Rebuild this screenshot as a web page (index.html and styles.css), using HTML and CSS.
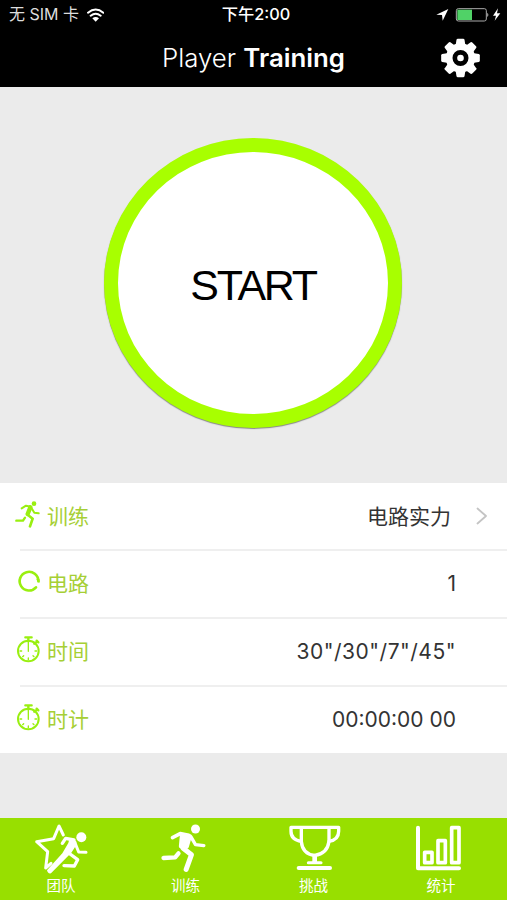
FILE: index.html
```html
<!DOCTYPE html>
<html lang="zh-CN">
<head>
  <meta charset="UTF-8">
  <title>Player Training</title>
  <meta name="viewport" content="width=device-width, initial-scale=1.0">
  <link rel="stylesheet" href="styles.css">
</head>
<body>

<svg class="sprite" width="0" height="0">
  <symbol id="runner" viewBox="85.5 39 162 156">
    <circle cx="195" cy="57" r="13.5" fill="currentColor"/>
    <path d="M126 83L149 71L175 76" class="line" stroke-width="11"/>
    <path d="M154 77L178 79L169 110L151 109Z" fill="currentColor" stroke="currentColor" stroke-width="12" stroke-linejoin="round"/>
    <path d="M181 80L195 104L220 107" class="line" stroke-width="10"/>
    <path d="M157 114L183 134L167 178" class="line" stroke-width="15"/>
    <path d="M144 130L134 142L99 144" class="line" stroke-width="13"/>
  </symbol>
  <symbol id="stopwatch" viewBox="48 72 75 84">
    <circle cx="85" cy="120" r="31" class="line" stroke-width="6"/>
    <path d="M76 79H95M85 80V91M103 98L112 91M110 89L115 94" class="line" stroke-width="7"/>
    <path d="M85 94V121M60 120H65M105 120H110M85 141V146M68 137L71 134M99 134L102 137" class="line" stroke-width="4"/>
  </symbol>
</svg>

<div class="app">
  <header class="header">
    <div class="status">
      <div class="status-left">
        <span>无 SIM 卡</span>
        <svg class="wifi" viewBox="261 20 51 42">
          <path d="M264 34Q287 15 310 34M272 43Q287 31 302 43" class="line" stroke-width="6"/>
          <path d="M277 51Q287 43 297 51L287 61Z" fill="currentColor"/>
        </svg>
      </div>
      <div class="status-time">下午2:00</div>
      <div class="status-right">
        <svg class="power" viewBox="555 20 201 48">
          <path d="M595 26L559 43L576 44L578 61Z" fill="#fff"/>
          <rect x="619" y="25" width="90" height="37" rx="6" fill="none" stroke="#aaa" stroke-width="3"/>
          <path d="M622 28H666V59H622Z" fill="#50d267"/>
          <path d="M712 37Q718 43 712 50Z" fill="#ccc"/>
          <path d="M744 24L729 46H738L734 61L751 39H741Z" fill="#fff"/>
        </svg>
      </div>
    </div>
    <div class="title-bar">
      <h1>Player <b>Training</b></h1>
      <svg class="gear" viewBox="-60 -60 120 120">
        <g fill="currentColor">
          <path id="tooth" d="M-15 -36L-12 -55Q-11 -58 -8 -58H8Q11 -58 12 -55L15 -36Z"/>
          <use href="#tooth" transform="rotate(45)"/>
          <use href="#tooth" transform="rotate(90)"/>
          <use href="#tooth" transform="rotate(135)"/>
          <use href="#tooth" transform="rotate(180)"/>
          <use href="#tooth" transform="rotate(225)"/>
          <use href="#tooth" transform="rotate(270)"/>
          <use href="#tooth" transform="rotate(315)"/>
        </g>
        <circle r="34" fill="none" stroke="currentColor" stroke-width="20"/>
        <circle r="10" fill="currentColor"/>
      </svg>
    </div>
  </header>

  <main>
    <div class="start-area">
      <button class="start-btn">START</button>
    </div>

    <ul class="list">
      <li class="row">
        <svg class="row-icon row-runner" viewBox="45 57 78 84">
          <circle cx="102" cy="68" r="7" fill="currentColor"/>
          <path d="M65 82L78 74L92 77L103 95L116 97" class="line" stroke-width="6"/>
          <path d="M91 79L83 99" class="line" stroke-width="13"/>
          <path d="M83 101L98 113L90 136" class="line" stroke-width="8"/>
          <path d="M75 110L69 119L49 119" class="line" stroke-width="7"/>
        </svg>
        <span class="label">训练</span>
        <span class="value value-link">电路实力</span>
        <svg class="chevron" viewBox="0 0 12 18"><path d="M1.500 1.500L10 9L1.500 16.500" class="line" stroke-width="1.800"/></svg>
      </li>
      <li class="row">
        <svg class="row-icon" viewBox="50 260 75 84">
          <path d="M117 303A28 28 0 1 0 110 321" class="line" stroke-width="8"/>
          <path d="M110 297H121V307Z" fill="currentColor"/>
        </svg>
        <span class="label">电路</span>
        <span class="value">1</span>
      </li>
      <li class="row">
        <svg class="row-icon"><use href="#stopwatch"/></svg>
        <span class="label">时间</span>
        <span class="value value-sets">30"/30"/7"/45"</span>
      </li>
      <li class="row">
        <svg class="row-icon"><use href="#stopwatch"/></svg>
        <span class="label">时计</span>
        <span class="value">00:00:00 00</span>
      </li>
    </ul>
  </main>

  <nav class="tabs">
    <a class="tab">
      <svg viewBox="102 39 162 156">
        <path d="M190 75L177 48L161 86L110 95L143 125L137 174L153 160" class="line" stroke-width="9"/>
        <circle cx="244" cy="82" r="15" fill="currentColor"/>
        <path d="M187 100L197 85L222 90" class="line" stroke-width="10"/>
        <path d="M209 84L224 90Q233 95 229 105L214 128L153 190Q143 192 141 181L187 130L205 99Z" fill="currentColor"/>
        <path d="M227 104L236 126L258 127" class="line" stroke-width="9"/>
        <path d="M206 129L233 149L223 168L192 167" class="line" stroke-width="10"/>
      </svg>
      <span>团队</span>
    </a>
    <a class="tab">
      <svg><use href="#runner"/></svg>
      <span>训练</span>
    </a>
    <a class="tab">
      <svg viewBox="96 39 162 156">
        <path d="M108 52H251V64Q251 90 222 94M108 52V64Q108 90 139 94" class="line" stroke-width="10"/>
        <path d="M139 53V94Q142 132 179 136Q217 132 222 94V53" class="line" stroke-width="10"/>
        <path d="M179 138V154" class="line" stroke-width="14"/>
        <path d="M160 158H198" class="line" stroke-width="9"/>
        <path d="M131 174H225" class="line" stroke-width="12"/>
      </svg>
      <span>挑战</span>
    </a>
    <a class="tab">
      <svg viewBox="102 39 162 156">
        <path d="M114 53V175H237" class="line" stroke-width="12"/>
        <path d="M134 127H156V158H134ZM174 92H196V158H174ZM215 53H237V158H215Z" class="line" stroke-width="11"/>
      </svg>
      <span>统计</span>
    </a>
  </nav>
</div>

</body>
</html>
```

FILE: styles.css
```css
* {
  box-sizing: border-box;
}

body {
  margin: 0;
  font-family: Inter, "Noto Sans CJK SC", sans-serif;
  background: #ebebeb;
}

svg {
  display: block;
  flex: none;
}

.sprite {
  position: absolute;
}

.line {
  fill: none;
  stroke: currentColor;
  stroke-linecap: round;
  stroke-linejoin: round;
}

.app {
  display: flex;
  flex-direction: column;
  width: 507px;
  height: 900px;
  overflow: hidden;
}

.header {
  height: 87px;
  background: #000;
  color: #fff;
}

.status {
  display: grid;
  grid-template-columns: 1fr 100px 1fr;
  align-items: center;
  height: 29px;
  font-size: 16px;
  line-height: 29px;
}

.status-left {
  display: flex;
  align-items: center;
  gap: 8px;
  padding-left: 9px;
  color: #ddd;
  white-space: nowrap;
}

.wifi {
  width: 17px;
  height: 14px;
  color: #fff;
}

.status-time {
  margin-left: 5px;
  text-align: center;
  font-size: 16.3px;
  font-weight: 500;
  white-space: nowrap;
}

.status-right {
  display: flex;
  justify-content: flex-end;
  padding-right: 5px;
}

.power {
  width: 67px;
  height: 16px;
}

.title-bar {
  display: grid;
  grid-template-columns: 67px 1fr 67px;
  align-items: center;
  height: 58px;
}

h1 {
  grid-column: 2;
  margin: 0;
  font-size: 25.8px;
  font-weight: 300;
  line-height: 58px;
  text-align: center;
}

h1 b {
  font-weight: 600;
}

.gear {
  width: 41px;
  height: 40px;
}

main {
  flex: 1;
}

.start-area {
  display: flex;
  justify-content: center;
  height: 396px;
  padding: 51px 1px 0 0;
}

.start-btn {
  width: 298px;
  height: 290px;
  padding: 4px 0 0;
  border: 14px solid #a8ff00;
  border-radius: 50%;
  background: #fff;
  box-shadow: 0 1px 1px #888;
  font-family: "Liberation Sans", Arial, sans-serif;
  font-size: 43px;
  letter-spacing: -2.3px;
  color: #000;
}

.list {
  margin: 0;
  padding: 0 0 0 16px;
  list-style: none;
  background: #fff;
}

.row {
  display: flex;
  align-items: center;
  height: 68px;
  padding-right: 19px;
  font-size: 21px;
}

.row:first-child {
  height: 66px;
}

.row + .row {
  background: linear-gradient(#efefef, #efefef) 4px 0 / 100% 2px no-repeat;
}

.row-icon {
  width: 25px;
  height: 28px;
  margin: -5px 6px 0 0;
  color: #99ef10;
}

.row-runner {
  width: 26px;
  margin: -5px 6px 0 -1px;
}

.label {
  margin-top: -3px;
  color: #a6cf35;
}

.value {
  margin-left: auto;
  padding-right: 32px;
  color: #333;
}

.value-link {
  margin-top: -2px;
  padding-right: 25px;
}

.value-sets {
  letter-spacing: 0.5px;
}

.chevron {
  width: 12px;
  height: 18px;
  color: #c4c4c4;
}

.tabs {
  display: grid;
  grid-template-columns: 122px 127px 129px 126px;
  height: 82px;
  background: #98df00;
  color: #fff;
}

.tab {
  display: flex;
  flex-direction: column;
  align-items: center;
  padding-top: 5px;
  font-size: 14.5px;
  line-height: 22px;
}

.tab svg {
  width: 54px;
  height: 52px;
}
```
